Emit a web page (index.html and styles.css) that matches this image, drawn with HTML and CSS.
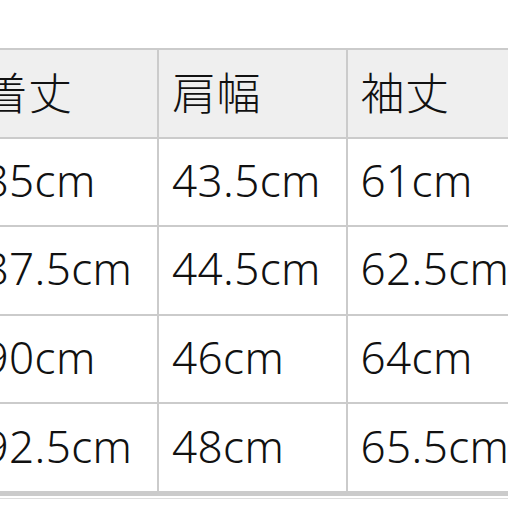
FILE: index.html
```html
<!DOCTYPE html>
<html lang="ja">
<head>
<meta charset="utf-8">
<link rel="stylesheet" href="styles.css">
</head>
<body>
<div class="page">
  <div class="table">
    <div class="cell head">着丈</div>
    <div class="cell head">肩幅</div>
    <div class="cell head">袖丈</div>
    <div class="cell">85cm</div>
    <div class="cell">43.5cm</div>
    <div class="cell">61cm</div>
    <div class="cell">87.5cm</div>
    <div class="cell">44.5cm</div>
    <div class="cell">62.5cm</div>
    <div class="cell">90cm</div>
    <div class="cell">46cm</div>
    <div class="cell">64cm</div>
    <div class="cell">92.5cm</div>
    <div class="cell">48cm</div>
    <div class="cell">65.5cm</div>
  </div>
  <div class="underline"></div>
</div>
</body>
</html>
```

FILE: styles.css
```css
html, body {
  margin: 0;
  padding: 0;
  background: #ffffff;
  overflow: hidden;
}
.page {
  width: 508px;
  height: 508px;
  overflow: hidden;
  padding-top: 48px;
  box-sizing: border-box;
}
.table {
  display: grid;
  grid-template-columns: 186.5px 186.5px 186.5px;
  grid-auto-rows: 86.6px;
  gap: 2px;
  padding: 2px 2px 5px 2px;
  background: #cbcbcb;
  margin-left: -31.5px;
  width: max-content;
}
.cell {
  background: #ffffff;
  display: flex;
  align-items: center;
  padding-left: 13px;
  padding-bottom: 4px;
  box-sizing: border-box;
  font-family: "Noto Sans", "Noto Sans CJK JP", sans-serif;
  font-weight: 300;
  font-size: 44px;
  letter-spacing: 0.4px;
  color: #111111;
  white-space: nowrap;
  overflow: hidden;
}
.head {
  background: #efefef;
}
.underline {
  height: 1px;
  margin-top: 2px;
  background: #dddddd;
}
```
